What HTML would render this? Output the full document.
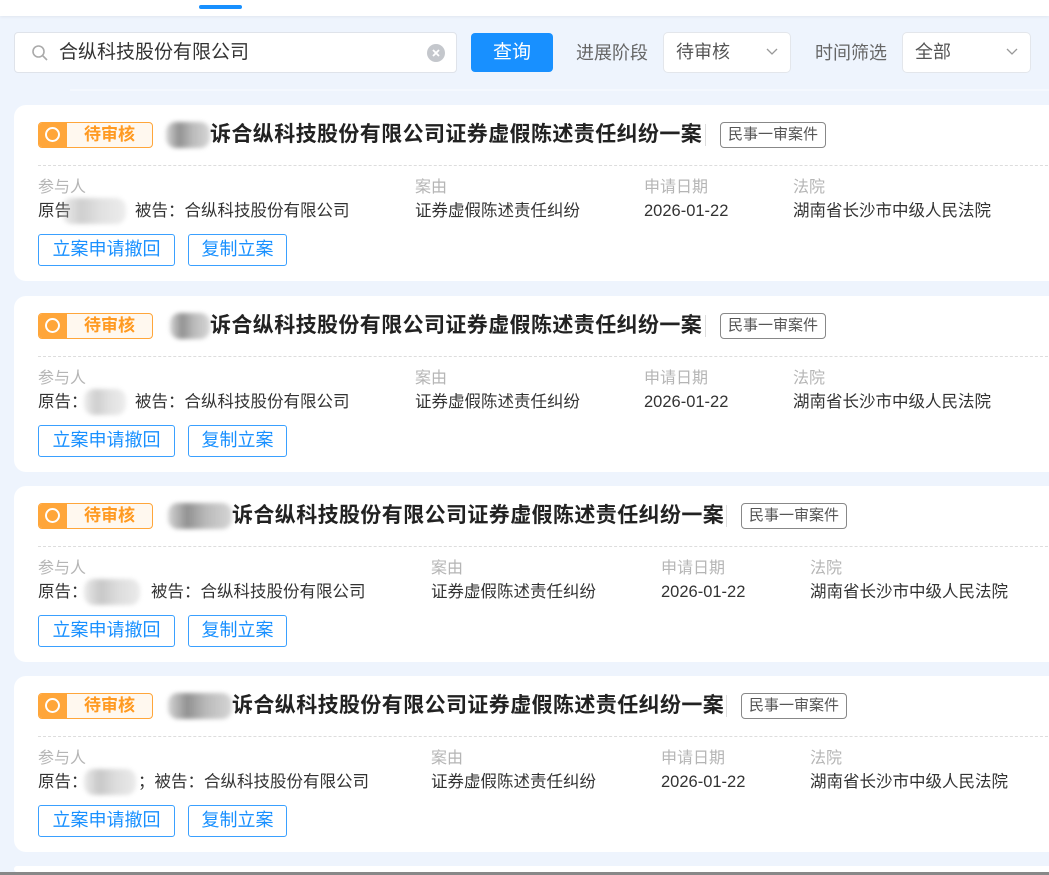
<!DOCTYPE html>
<html style="width:1049px;height:875px;overflow:hidden"><head><meta charset="utf-8"><style>
*{margin:0;padding:0;box-sizing:border-box}
body{width:1049px;height:875px;overflow:hidden;background:#eef4fd;font-family:"Liberation Sans","Noto Sans CJK SC",sans-serif;position:relative;color:#333}
.abs{position:absolute}
.hdr{left:0;top:0;width:1049px;height:16px;background:#fff;box-shadow:0 1px 3px rgba(0,0,0,.06)}
.ind{left:199px;top:5px;width:43px;height:4px;border-radius:2px;background:#1890ff}
.search{left:14px;top:32px;width:443px;height:41px;background:#fff;border:1px solid #dfe3ea;border-radius:4px}
.btn{left:471px;top:33px;width:82px;height:39px;background:#1890ff;border-radius:4px;color:#fff;font-size:19px;text-align:center;line-height:39px}
.lbl{font-size:18px;color:#666;line-height:20px}
.sel{height:41px;background:#fff;border:1px solid #e3e6eb;border-radius:5px;font-size:18px;color:#555;line-height:39px;padding-left:12px}
.sel svg{position:absolute;right:12px;top:15px}
.sep{left:70px;top:89px;width:979px;height:2px;background:#f4f8fe}
.card{left:14px;width:1060px;height:176px;background:#fff;border-radius:12px}
.tag{left:24px;top:17px;width:115px;height:26px;border:1.5px solid #ffa63a;border-radius:4px;background:#fff8ef;overflow:hidden}
.tag i{position:absolute;left:0;top:0;width:28px;height:100%;background:#ffa63a}
.tag i:after{content:"";position:absolute;left:6px;top:4px;width:11px;height:11px;border:2.5px solid #fff;border-radius:50%}
.tag b{position:absolute;left:28px;right:0;top:0;text-align:center;font-size:17px;line-height:23px;color:#ff9a22}
.blur{height:26px;border-radius:10px;background:linear-gradient(90deg,#ccc,#777 30%,#aaa 60%,#ccc);filter:blur(2px);opacity:.8}
.title{font-size:21px;font-weight:bold;color:#222;line-height:26px;white-space:nowrap;letter-spacing:0.4px}
.vbar{width:1px;height:22px;background:#ddd}
.dt{height:26px;border:1.5px solid #888;border-radius:4px;font-size:15px;color:#555;line-height:23px;padding:0 7px}
.dash{left:24px;top:60px;width:1040px;border-top:1px dashed #ddd}
.l{font-size:16px;color:#b5b5b5;line-height:20px;white-space:nowrap}
.v{font-size:16.5px;color:#333;line-height:20px;white-space:nowrap}
.ob{top:129px;height:32px;border:1.5px solid #3aa0ff;border-radius:3px;color:#1890ff;font-size:18px;line-height:29px;text-align:center}
</style></head><body>
<div class="abs hdr"></div><div class="abs ind"></div>
<div class="abs search">
<svg class="abs" style="left:16px;top:11px" width="18" height="18" viewBox="0 0 18 18"><circle cx="7.5" cy="7.5" r="5.5" fill="none" stroke="#aaa" stroke-width="1.6"/><path d="M11.5 11.5L16 16" stroke="#aaa" stroke-width="1.6"/></svg>
<div class="abs" style="left:44px;top:9px;font-size:19px;color:#333;line-height:22px">合纵科技股份有限公司</div>
<svg class="abs" style="left:412px;top:11px" width="18" height="18"><circle cx="9" cy="9" r="9" fill="#c4c7cc"/><path d="M6 6L12 12M12 6L6 12" stroke="#fff" stroke-width="1.8"/></svg>
</div>
<div class="abs btn">查询</div>
<div class="abs lbl" style="left:576px;top:43px">进展阶段</div>
<div class="abs sel" style="left:663px;top:32px;width:128px">待审核<svg width="12" height="8"><path d="M1 1L6 6L11 1" fill="none" stroke="#999" stroke-width="1.3"/></svg></div>
<div class="abs lbl" style="left:815px;top:43px">时间筛选</div>
<div class="abs sel" style="left:902px;top:32px;width:129px">全部<svg width="12" height="8"><path d="M1 1L6 6L11 1" fill="none" stroke="#999" stroke-width="1.3"/></svg></div>
<div class="abs sep"></div>

<div class="abs card" style="top:105px">
<div class="abs tag"><i></i><b>待审核</b></div>
<div class="abs blur" style="left:152px;top:17px;width:44px"></div>
<div class="abs title" style="left:196px;top:17px">诉合纵科技股份有限公司证券虚假陈述责任纠纷一案</div>
<div class="abs vbar" style="left:691px;top:19px"></div>
<div class="abs dt" style="left:706px;top:17px">民事一审案件</div>
<div class="abs dash"></div>
<div class="abs l" style="left:24px;top:73px">参与人</div>
<div class="abs v" style="left:24px;top:96px">原告</div>
<div class="abs blur" style="left:48px;top:93px;width:64px;opacity:.35"></div>
<div class="abs v" style="left:121px;top:96px">被告：合纵科技股份有限公司</div>
<div class="abs l" style="left:401px;top:73px">案由</div><div class="abs v" style="left:401px;top:96px">证券虚假陈述责任纠纷</div>
<div class="abs l" style="left:630px;top:73px">申请日期</div><div class="abs v" style="left:630px;top:96px">2026-01-22</div>
<div class="abs l" style="left:779px;top:73px">法院</div><div class="abs v" style="left:779px;top:96px">湖南省长沙市中级人民法院</div>
<div class="abs ob" style="left:24px;width:137px">立案申请撤回</div>
<div class="abs ob" style="left:174px;width:99px">复制立案</div>
</div>

<div class="abs card" style="top:296px">
<div class="abs tag"><i></i><b>待审核</b></div>
<div class="abs blur" style="left:156px;top:17px;width:40px"></div>
<div class="abs title" style="left:196px;top:17px">诉合纵科技股份有限公司证券虚假陈述责任纠纷一案</div>
<div class="abs vbar" style="left:691px;top:19px"></div>
<div class="abs dt" style="left:706px;top:17px">民事一审案件</div>
<div class="abs dash"></div>
<div class="abs l" style="left:24px;top:73px">参与人</div>
<div class="abs v" style="left:24px;top:96px">原告：</div>
<div class="abs blur" style="left:70px;top:93px;width:42px;opacity:.35"></div>
<div class="abs v" style="left:121px;top:96px">被告：合纵科技股份有限公司</div>
<div class="abs l" style="left:401px;top:73px">案由</div><div class="abs v" style="left:401px;top:96px">证券虚假陈述责任纠纷</div>
<div class="abs l" style="left:630px;top:73px">申请日期</div><div class="abs v" style="left:630px;top:96px">2026-01-22</div>
<div class="abs l" style="left:779px;top:73px">法院</div><div class="abs v" style="left:779px;top:96px">湖南省长沙市中级人民法院</div>
<div class="abs ob" style="left:24px;width:137px">立案申请撤回</div>
<div class="abs ob" style="left:174px;width:99px">复制立案</div>
</div>

<div class="abs card" style="top:486px">
<div class="abs tag"><i></i><b>待审核</b></div>
<div class="abs blur" style="left:154px;top:17px;width:64px"></div>
<div class="abs title" style="left:218px;top:17px">诉合纵科技股份有限公司证券虚假陈述责任纠纷一案</div>
<div class="abs vbar" style="left:712px;top:19px"></div>
<div class="abs dt" style="left:727px;top:17px">民事一审案件</div>
<div class="abs dash"></div>
<div class="abs l" style="left:24px;top:73px">参与人</div>
<div class="abs v" style="left:24px;top:96px">原告：</div>
<div class="abs blur" style="left:70px;top:93px;width:56px;opacity:.4"></div>
<div class="abs v" style="left:137px;top:96px">被告：合纵科技股份有限公司</div>
<div class="abs l" style="left:417px;top:73px">案由</div><div class="abs v" style="left:417px;top:96px">证券虚假陈述责任纠纷</div>
<div class="abs l" style="left:647px;top:73px">申请日期</div><div class="abs v" style="left:647px;top:96px">2026-01-22</div>
<div class="abs l" style="left:796px;top:73px">法院</div><div class="abs v" style="left:796px;top:96px">湖南省长沙市中级人民法院</div>
<div class="abs ob" style="left:24px;width:137px">立案申请撤回</div>
<div class="abs ob" style="left:174px;width:99px">复制立案</div>
</div>

<div class="abs card" style="top:676px">
<div class="abs tag"><i></i><b>待审核</b></div>
<div class="abs blur" style="left:154px;top:17px;width:64px"></div>
<div class="abs title" style="left:218px;top:17px">诉合纵科技股份有限公司证券虚假陈述责任纠纷一案</div>
<div class="abs vbar" style="left:712px;top:19px"></div>
<div class="abs dt" style="left:727px;top:17px">民事一审案件</div>
<div class="abs dash"></div>
<div class="abs l" style="left:24px;top:73px">参与人</div>
<div class="abs v" style="left:24px;top:96px">原告：</div>
<div class="abs blur" style="left:70px;top:93px;width:52px;opacity:.4"></div>
<div class="abs v" style="left:124px;top:96px">；被告：合纵科技股份有限公司</div>
<div class="abs l" style="left:417px;top:73px">案由</div><div class="abs v" style="left:417px;top:96px">证券虚假陈述责任纠纷</div>
<div class="abs l" style="left:647px;top:73px">申请日期</div><div class="abs v" style="left:647px;top:96px">2026-01-22</div>
<div class="abs l" style="left:796px;top:73px">法院</div><div class="abs v" style="left:796px;top:96px">湖南省长沙市中级人民法院</div>
<div class="abs ob" style="left:24px;width:137px">立案申请撤回</div>
<div class="abs ob" style="left:174px;width:99px">复制立案</div>
</div>

<div class="abs card" style="top:866px;height:6px"></div>
<div class="abs" style="left:0;top:872px;width:1049px;height:3px;background:#888"></div>
</body></html>
